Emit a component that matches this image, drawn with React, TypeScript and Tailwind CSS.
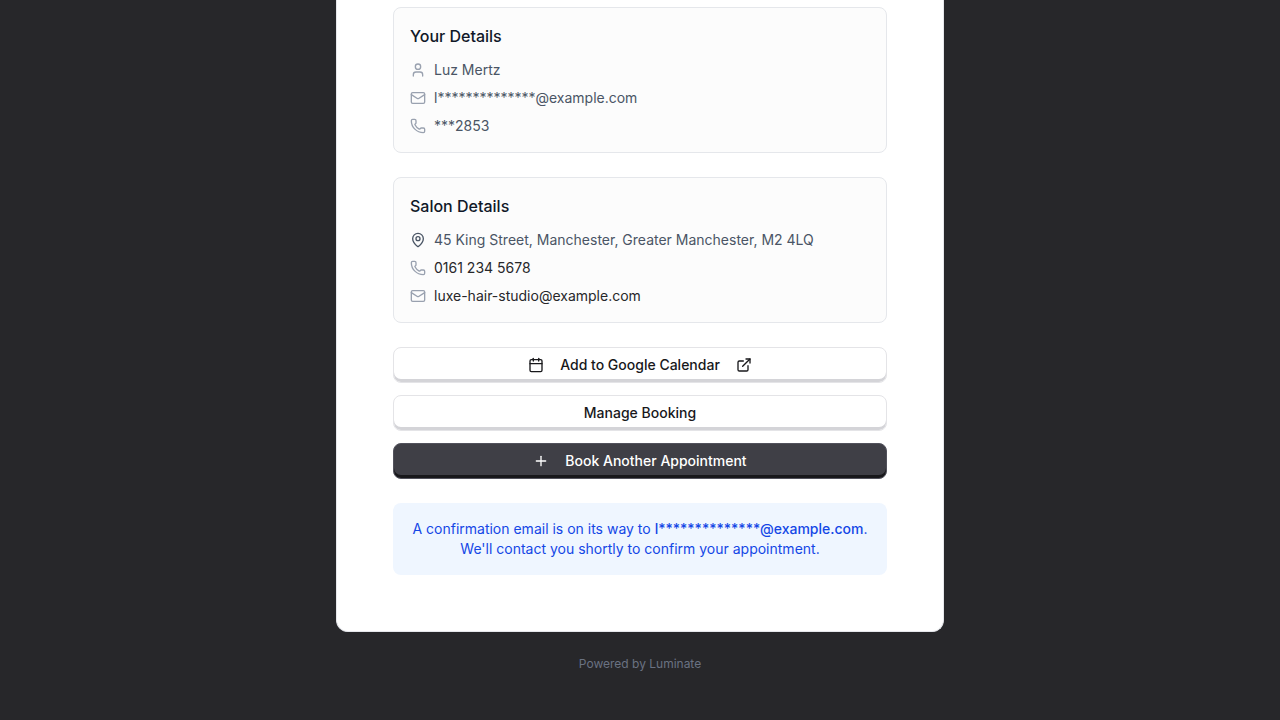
import React from "react";
import { Calendar, ExternalLink, Mail, MapPin, Phone, Plus, User } from "lucide-react";

interface DetailsCardProps {
  title: string;
  children: React.ReactNode;
}

function DetailsCard({ title, children }: DetailsCardProps) {
  return (
    <section className="rounded-lg border border-gray-200 bg-[#fcfcfc] p-4">
      <h2 className="mb-3 text-base font-medium text-gray-900">{title}</h2>
      <ul className="space-y-2 text-sm text-gray-600">{children}</ul>
    </section>
  );
}

interface DetailRowProps {
  icon: React.ReactNode;
  children: React.ReactNode;
}

function DetailRow({ icon, children }: DetailRowProps) {
  return (
    <li className="flex items-center gap-2">
      {icon}
      {children}
    </li>
  );
}

const buttonBase =
  "flex h-9 w-full items-center justify-center gap-4 rounded-lg border text-sm font-medium";
const outlineButton =
  "border-zinc-200 bg-white text-zinc-900 shadow-[inset_0_-3px_0_0_#d4d4d8] hover:bg-zinc-50";
const primaryButton =
  "border-zinc-600 bg-[#3f3f46] text-white shadow-[inset_0_-3px_0_0_#18181b] hover:bg-zinc-600";

export default function App() {
  return (
    <div className="min-h-screen bg-[#27272a] px-4 pb-12 font-['Inter',sans-serif]">
      <main className="mx-auto max-w-[608px] rounded-b-xl border border-t-0 border-gray-200 bg-white px-14 pt-[7px] pb-14">
        <div className="space-y-6">
          <DetailsCard title="Your Details">
            <DetailRow icon={<User size={16} className="text-gray-400" />}>
              <span>Luz Mertz</span>
            </DetailRow>
            <DetailRow icon={<Mail size={16} className="text-gray-400" />}>
              <span>l**************@example.com</span>
            </DetailRow>
            <DetailRow icon={<Phone size={16} className="text-gray-400" />}>
              <span>***2853</span>
            </DetailRow>
          </DetailsCard>

          <DetailsCard title="Salon Details">
            <DetailRow icon={<MapPin size={16} />}>
              <span>45 King Street, Manchester, Greater Manchester, M2 4LQ</span>
            </DetailRow>
            <DetailRow icon={<Phone size={16} className="text-gray-400" />}>
              <a href="tel:01612345678" className="text-zinc-800 hover:underline">
                0161 234 5678
              </a>
            </DetailRow>
            <DetailRow icon={<Mail size={16} className="text-gray-400" />}>
              <a href="mailto:luxe-hair-studio@example.com" className="text-zinc-800 hover:underline">
                luxe-hair-studio@example.com
              </a>
            </DetailRow>
          </DetailsCard>

          <div className="space-y-3">
            <button type="button" className={`${buttonBase} ${outlineButton}`}>
              <Calendar size={16} />
              Add to Google Calendar
              <ExternalLink size={16} />
            </button>
            <button type="button" className={`${buttonBase} ${outlineButton}`}>
              Manage Booking
            </button>
            <button type="button" className={`${buttonBase} ${primaryButton}`}>
              <Plus size={16} />
              Book Another Appointment
            </button>
          </div>

          <div className="rounded-lg bg-blue-50 p-4 text-center text-sm text-blue-700">
            <p>
              A confirmation email is on its way to{" "}
              <strong className="font-medium">l**************@example.com</strong>.
            </p>
            <p>We'll contact you shortly to confirm your appointment.</p>
          </div>
        </div>
      </main>

      <footer className="mt-6 text-center text-xs text-gray-500">Powered by Luminate</footer>
    </div>
  );
}
